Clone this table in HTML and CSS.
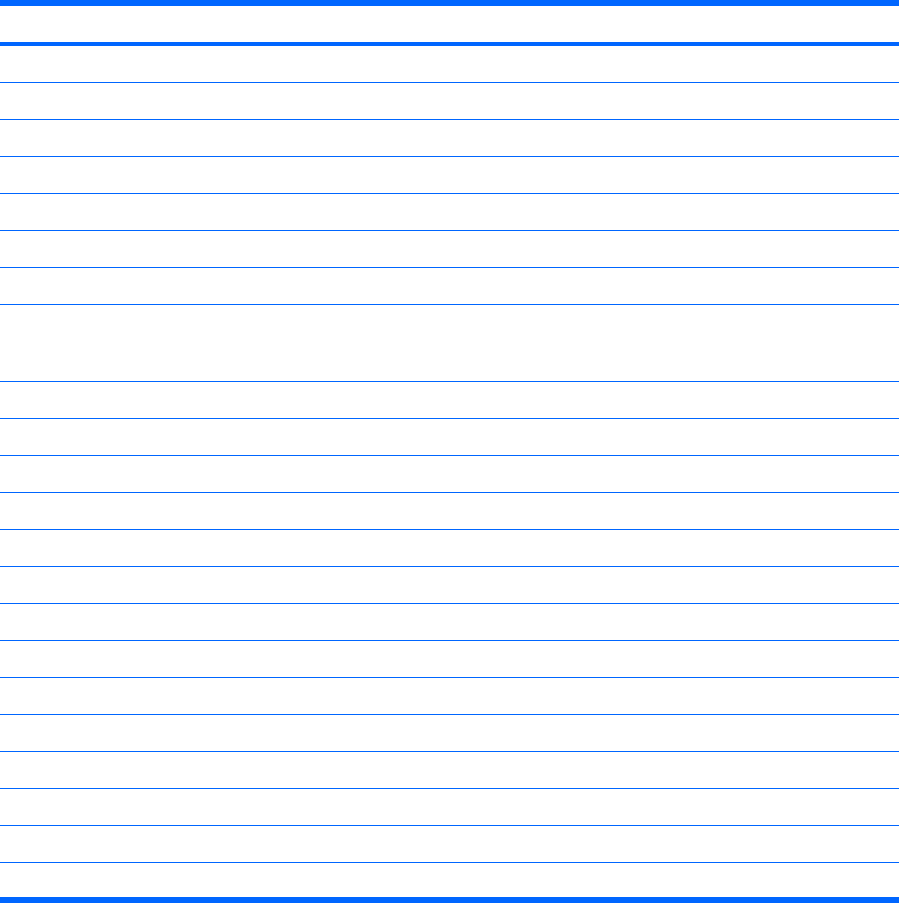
FILE: index.html
```html
<!DOCTYPE html>
<html lang="en">
<head>
  <meta charset="UTF-8">
  <meta name="viewport" content="width=device-width, initial-scale=1.0">
  <title>Table</title>
  <link rel="stylesheet" href="styles.css">
</head>
<body>
  <!-- Empty ruled table -->
  <div class="sheet">
    <div class="head"></div>
    <div class="row"></div>
    <div class="row"></div>
    <div class="row"></div>
    <div class="row"></div>
    <div class="row"></div>
    <div class="row"></div>
    <div class="row"></div>
    <div class="row tall"></div>
    <div class="row"></div>
    <div class="row"></div>
    <div class="row"></div>
    <div class="row"></div>
    <div class="row"></div>
    <div class="row"></div>
    <div class="row"></div>
    <div class="row"></div>
    <div class="row"></div>
    <div class="row"></div>
    <div class="row"></div>
    <div class="row"></div>
    <div class="row"></div>
    <div class="row last"></div>
  </div>
</body>
</html>
```

FILE: styles.css
```css
/* Reset & Base */
* { box-sizing: content-box; margin: 0; padding: 0; }
body { font-family: 'Liberation Sans', Arial, sans-serif; background: #fff; color: #000; }
/* Table */
.sheet {
  width: 899px;
  border-top: 6px solid #0066ff;
  border-bottom: 6px solid #0066ff;
}
.head { height: 36px; border-bottom: 4px solid #0066ff; }
.row { height: 36px; border-bottom: 1px solid #0066ff; }
.row.tall { height: 76px; }
.row.last { height: 34px; border-bottom: none; }
```
